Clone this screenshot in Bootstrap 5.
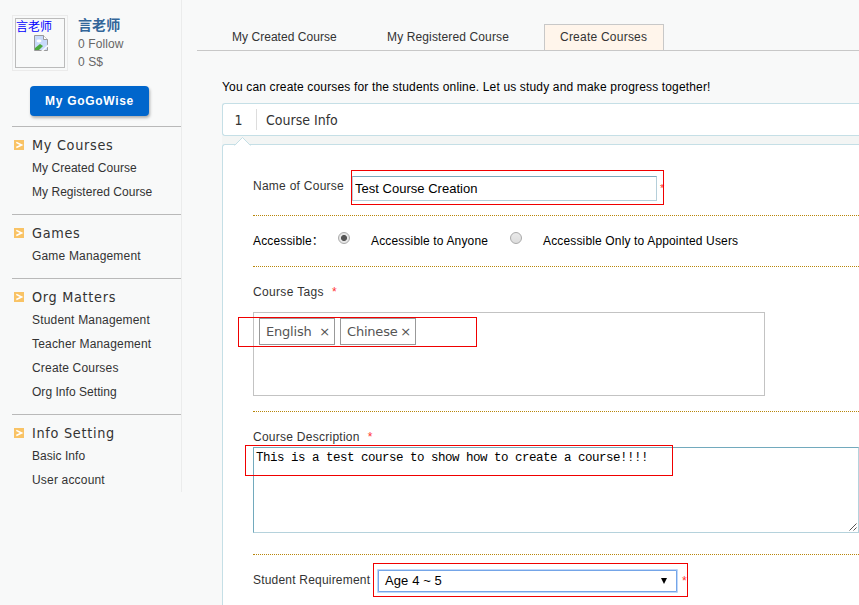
<!DOCTYPE html>
<html lang="en">
<head>
<meta charset="utf-8">
<meta name="viewport" content="width=device-width, initial-scale=1">
<title>Create Courses</title>
<link href="https://cdn.jsdelivr.net/npm/bootstrap@5.3.0/dist/css/bootstrap.min.css" rel="stylesheet">
<style>
body{font:12px/18px "Liberation Sans","Noto Sans CJK SC",sans-serif;color:#333;background:#f8f9f9;height:605px;overflow:hidden}
a{color:inherit;text-decoration:none}
.side{width:182px;height:492px;padding:15px 0 0 12px;border-right:1px solid #ebecec}
.avatar{width:56px;height:56px;padding:2px;border:1px solid #ebebeb}
.avatar-in{height:50px;border:1px solid #bbb;color:#00f;line-height:16px}
.avatar-in svg{display:block;margin:0 auto 0 18px}
.who{font-size:14px;font-weight:700;color:#369;line-height:20px}
.stats{color:#666;padding-left:10px;letter-spacing:.1px}
.btn-wise{width:119px;height:30px;margin:15px 0 10px 18px;padding:0;background:#06c;color:#fff;border:0;border-radius:4px;font-size:12px;font-weight:700;letter-spacing:.7px;line-height:30px;box-shadow:1px 2px 3px rgba(0,0,0,.3)}
.menu{border-top:1px solid #b9b9b9;padding:8px 0 10px}
.menu h2{font:14.3px/20px "DejaVu Sans Condensed","DejaVu Sans",sans-serif;letter-spacing:.7px;margin:0 0 1px}
.menu h2 svg{margin:0 8px 0 2px;flex:none}
.menu a{display:block;line-height:24px;padding-left:20px}
.menu a,.tabs a{letter-spacing:.04px}
.menu a.wide{letter-spacing:.18px}
.main{margin-left:15px;min-width:0}
.tabs{height:51px;border-bottom:1px solid #c8c8c8}
.tabs a{line-height:26px}
.tabs .t1{width:155px;padding-left:35px}
.tabs .t2{width:192px;padding-left:35px;letter-spacing:.13px}
.tabs .on{width:120px;height:26px;border:1px solid #c8c8c8;border-bottom:0;background:#fff5eb;line-height:25px;padding-left:15px;letter-spacing:.23px}
.content{padding-left:25px}
.intro{color:#000;height:52px;padding-top:27px;letter-spacing:.16px}
.step{height:33px;border:1px solid #c5dfe6;border-right:0;border-radius:3px 0 0 3px;background:#fff;font:14px/31px "DejaVu Sans Condensed","DejaVu Sans",sans-serif}
.step .num{width:34px;height:21px;line-height:22px;border-right:1px solid #ddd;text-align:center;padding-right:2px}
.step .ttl{padding:1px 0 0 9px}
.gap{height:8px;background:#f3f5f4}
.panel{height:470px;border:1px solid #c5dfe6;border-right:0;border-radius:3px 0 0 0;background:#fff;padding-left:30px;position:relative}
.notch{position:absolute;left:11px;top:-9px}
.line{border-bottom:1px dotted #b8860b}
.r1{height:71px}.r2{height:51px;color:#000}.r3{height:145px}.r4{height:143px}.r5{height:52px}
.lab{letter-spacing:.26px}
.r1 .lab{width:91px;padding-top:32px}
.r1 .star{padding:34px 0 0 3px;font-size:11px}
.r3 .lab{height:45px;padding-top:16px;letter-spacing:.34px}
.r4 .lab{height:35px;padding-top:16px}
.r5 .lab{width:118px;padding-bottom:2px;letter-spacing:.2px}
.gapstar{margin-left:8px}
.star{color:#f33}
.name-in{width:305px;height:25px;margin:31px 0 0 8px;padding:0 2px;border:1px solid #b5cfda;border-top-color:#7ba9bd;border-radius:0;font-size:13px;color:#000;background:#fff;outline:0;letter-spacing:.02px}
.acc{width:85px;letter-spacing:.15px;white-space:nowrap}
.opt{padding-left:21px;letter-spacing:.15px}
.opt.first{width:160px}
.radio{appearance:none;width:12px;height:12px;margin:0 0 6px;border:1px solid #aaa;border-radius:50%;background:linear-gradient(#e9e9e9,#ddd)}
.radio:checked{background:radial-gradient(circle,#555 0 2.7px,#e6e6e6 3.3px)}
.tagbox{width:512px;height:84px;border:1px solid #c3c3c3;padding:5px 0 0 5px;gap:5px}
.tag{width:76px;height:27px;border:1px solid #999;font:13px/25px "DejaVu Sans",sans-serif;letter-spacing:-.2px;color:#555;padding:0 4px 0 6px}
.desc{width:606px;height:86px;border:1px solid #b5d2dc;border-top-color:#72aabd;border-left-color:#72aabd;color:#000;padding:3px 2px;font:12.5px/15px "Liberation Mono",monospace;letter-spacing:-.5px;position:relative}
.desc svg{position:absolute;right:1px;bottom:1px}
.sel{width:301px;height:24px;margin-left:6px;border:2px solid #74a5e8;border-radius:2px;outline:1px solid #c0d8fa;outline-offset:-1px;color:#000;font-size:13px;line-height:20px;padding:0 5px 0 6px;background:#fff;letter-spacing:.1px}
.note{position:absolute;border:1px solid #f00000;pointer-events:none}
.n1{left:351px;top:170px;width:313px;height:35px}
.n2{left:238px;top:317px;width:239px;height:30px}
.n3{left:245px;top:445px;width:428px;height:31px}
.n4{left:373px;top:563px;width:315px;height:34px}
</style>
<script src="https://cdn.jsdelivr.net/npm/bootstrap@5.3.0/dist/js/bootstrap.bundle.min.js"></script>
</head>
<body>
<svg class="d-none"><symbol id="arrow" viewBox="0 0 10 10"><path fill="#f9c365" d="M0 0h10v10H0z"/><path d="M2.3 2.3 7.7 5 2.3 7.5" fill="none" stroke="#fff" stroke-width="1.5"/></symbol></svg>
<div class="d-flex">
<aside class="side flex-shrink-0">
  <div class="d-flex">
    <div class="avatar"><div class="avatar-in">言老师
      <svg width="14" height="16" viewBox="0 0 14 16"><path d="M.5.5h9l4 4v11H.5z" fill="#c8dafa" stroke="#999"/><path d="M9.5.5v4h4" fill="#fff" stroke="#999"/><ellipse cx="5" cy="6" rx="2.5" ry="1.4" fill="#fff"/><path d="M1 15v-2l5-4 3 2-4 4z" fill="#4aa83c"/><path d="M7 16 14 9.5v2L9.500 16z" fill="#f8f9f9"/></svg>
    </div></div>
    <div class="stats"><div class="who">言老师</div><div>0 Follow</div><div>0 S$</div></div>
  </div>
  <button class="btn btn-wise">My GoGoWise</button>
  <nav>
    <div class="menu"><h2 class="d-flex align-items-center"><svg width="10" height="10"><use href="#arrow"/></svg>My Courses</h2><a href="#">My Created Course</a><a href="#">My Registered Course</a></div>
    <div class="menu"><h2 class="d-flex align-items-center"><svg width="10" height="10"><use href="#arrow"/></svg>Games</h2><a href="#" class="wide">Game Management</a></div>
    <div class="menu"><h2 class="d-flex align-items-center"><svg width="10" height="10"><use href="#arrow"/></svg>Org Matters</h2><a href="#" class="wide">Student Management</a><a href="#" class="wide">Teacher Management</a><a href="#" class="wide">Create Courses</a><a href="#">Org Info Setting</a></div>
    <div class="menu"><h2 class="d-flex align-items-center"><svg width="10" height="10"><use href="#arrow"/></svg>Info Setting</h2><a href="#">Basic Info</a><a href="#" class="wide">User account</a></div>
  </nav>
</aside>
<main class="main flex-grow-1">
  <div class="tabs d-flex align-items-end">
    <a href="#" class="t1">My Created Course</a>
    <a href="#" class="t2">My Registered Course</a>
    <a href="#" class="on">Create Courses</a>
  </div>
  <div class="content">
    <div class="intro">You can create courses for the students online. Let us study and make progress together!</div>
    <div class="step d-flex align-items-center"><div class="num">1</div><div class="ttl">Course Info</div></div>
    <div class="gap"></div>
    <div class="panel">
      <svg class="notch" width="18" height="10" viewBox="0 0 18 10"><path d="M1 9.5 8.500 1.500 16 9.500V10H1z" fill="#fff"/><path d="M.5 9.500 8.500 1.500 16.500 9.500" fill="none" stroke="#c5dfe6"/></svg>
      <div class="r1 line d-flex"><label class="lab">Name of Course</label><input class="name-in" value="Test Course Creation"><span class="star">*</span></div>
      <div class="r2 line d-flex align-items-center"><span class="acc">Accessible：</span><input class="radio" type="radio" name="access" checked><span class="opt first">Accessible to Anyone</span><input class="radio" type="radio" name="access"><span class="opt">Accessible Only to Appointed Users</span></div>
      <div class="r3 line"><div class="lab">Course Tags<span class="star gapstar">*</span></div>
        <div class="tagbox d-flex align-items-start"><div class="tag d-flex justify-content-between"><span>English</span><span>×</span></div><div class="tag d-flex justify-content-between"><span>Chinese</span><span>×</span></div></div></div>
      <div class="r4 line"><div class="lab">Course Description<span class="star gapstar">*</span></div>
        <div class="desc">This is a test course to show how to create a course!!!!<svg width="8" height="8"><path d="M.5 7.5l7-7M4.5 7.5l3-3" stroke="#555" fill="none"/></svg></div></div>
      <div class="r5 d-flex align-items-center"><span class="lab">Student Requirement</span><div class="sel d-flex justify-content-between"><span>Age 4 ~ 5</span><svg width="6" height="6" class="align-self-center me-1"><path d="M0 0h6L3 6z"/></svg></div><span class="star ps-1">*</span></div>
    </div>
  </div>
</main>
</div>
<div class="note n1"></div><div class="note n2"></div><div class="note n3"></div><div class="note n4"></div>
</body>
</html>
